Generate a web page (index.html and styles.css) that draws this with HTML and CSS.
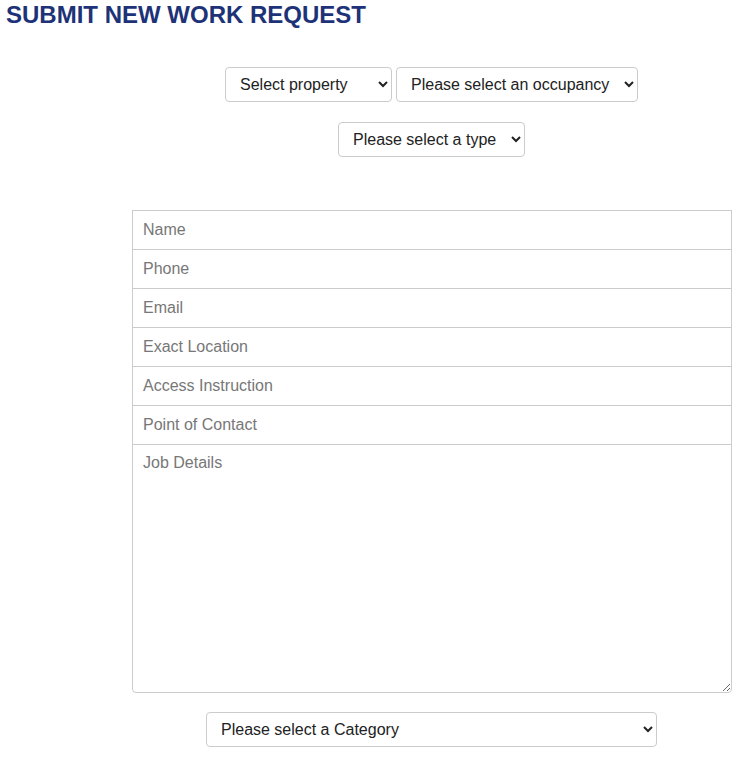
FILE: index.html
```html
<!DOCTYPE html>
<html>
<head>
<meta charset="utf-8">
<link rel="stylesheet" href="styles.css">
</head>
<body>
<h1 class="title">SUBMIT NEW WORK REQUEST</h1>
<div class="wrap">
  <div class="row row-top">
    <select class="sel sel-property"><option>Select property</option></select>
    <select class="sel sel-occupancy"><option>Please select an occupancy</option></select>
  </div>
  <div class="row row-type">
    <select class="sel sel-type"><option>Please select a type</option></select>
  </div>
  <form class="form">
    <input class="field" type="text" placeholder="Name">
    <input class="field" type="text" placeholder="Phone">
    <input class="field" type="text" placeholder="Email">
    <input class="field" type="text" placeholder="Exact Location">
    <input class="field" type="text" placeholder="Access Instruction">
    <input class="field" type="text" placeholder="Point of Contact">
    <textarea class="field area" placeholder="Job Details"></textarea>
  </form>
  <div class="row row-cat">
    <select class="sel sel-category"><option>Please select a Category</option></select>
  </div>
</div>
</body>
</html>
```
FILE: styles.css
```css
html, body {
  margin: 0;
  padding: 0;
  background: #fff;
  font-family: "Liberation Sans", Arial, sans-serif;
}
.title {
  margin: 0;
  padding: 1px 0 0 6px;
  font-size: 24px;
  line-height: 27px;
  font-weight: bold;
  color: #1e3278;
}
.wrap {
  margin-left: 132px;
  width: 600px;
  display: flex;
  flex-direction: column;
  align-items: center;
}
.row {
  display: flex;
  gap: 4px;
  justify-content: center;
  margin-right: 1px;
}
.row-top { margin-top: 39px; }
.row-type { margin-top: 20px; }
.row-cat { margin-top: 19px; }
.sel {
  height: 35px;
  font-family: "Liberation Sans", Arial, sans-serif;
  font-size: 16px;
  color: #222;
  background: #fff;
  border: 1px solid #ccc;
  border-radius: 4px;
  padding: 0 8px 0 10px;
}
.sel-property { width: 167px; }
.sel-occupancy { width: 242px; }
.sel-type { width: 187px; }
.sel-category { width: 451px; }
.form {
  margin-top: 53px;
  width: 600px;
  display: flex;
  flex-direction: column;
}
.field {
  box-sizing: border-box;
  width: 600px;
  height: 40px;
  margin: 0 0 -1px 0;
  border: 1px solid #ccc;
  padding: 0 10px;
  font-family: "Liberation Sans", Arial, sans-serif;
  font-size: 16px;
  color: #333;
  outline: none;
}
.field::placeholder { color: #777; }
.area {
  height: 249px;
  margin: 0;
  padding: 9px 10px;
  border-radius: 0 0 4px 4px;
  resize: both;
}
```
